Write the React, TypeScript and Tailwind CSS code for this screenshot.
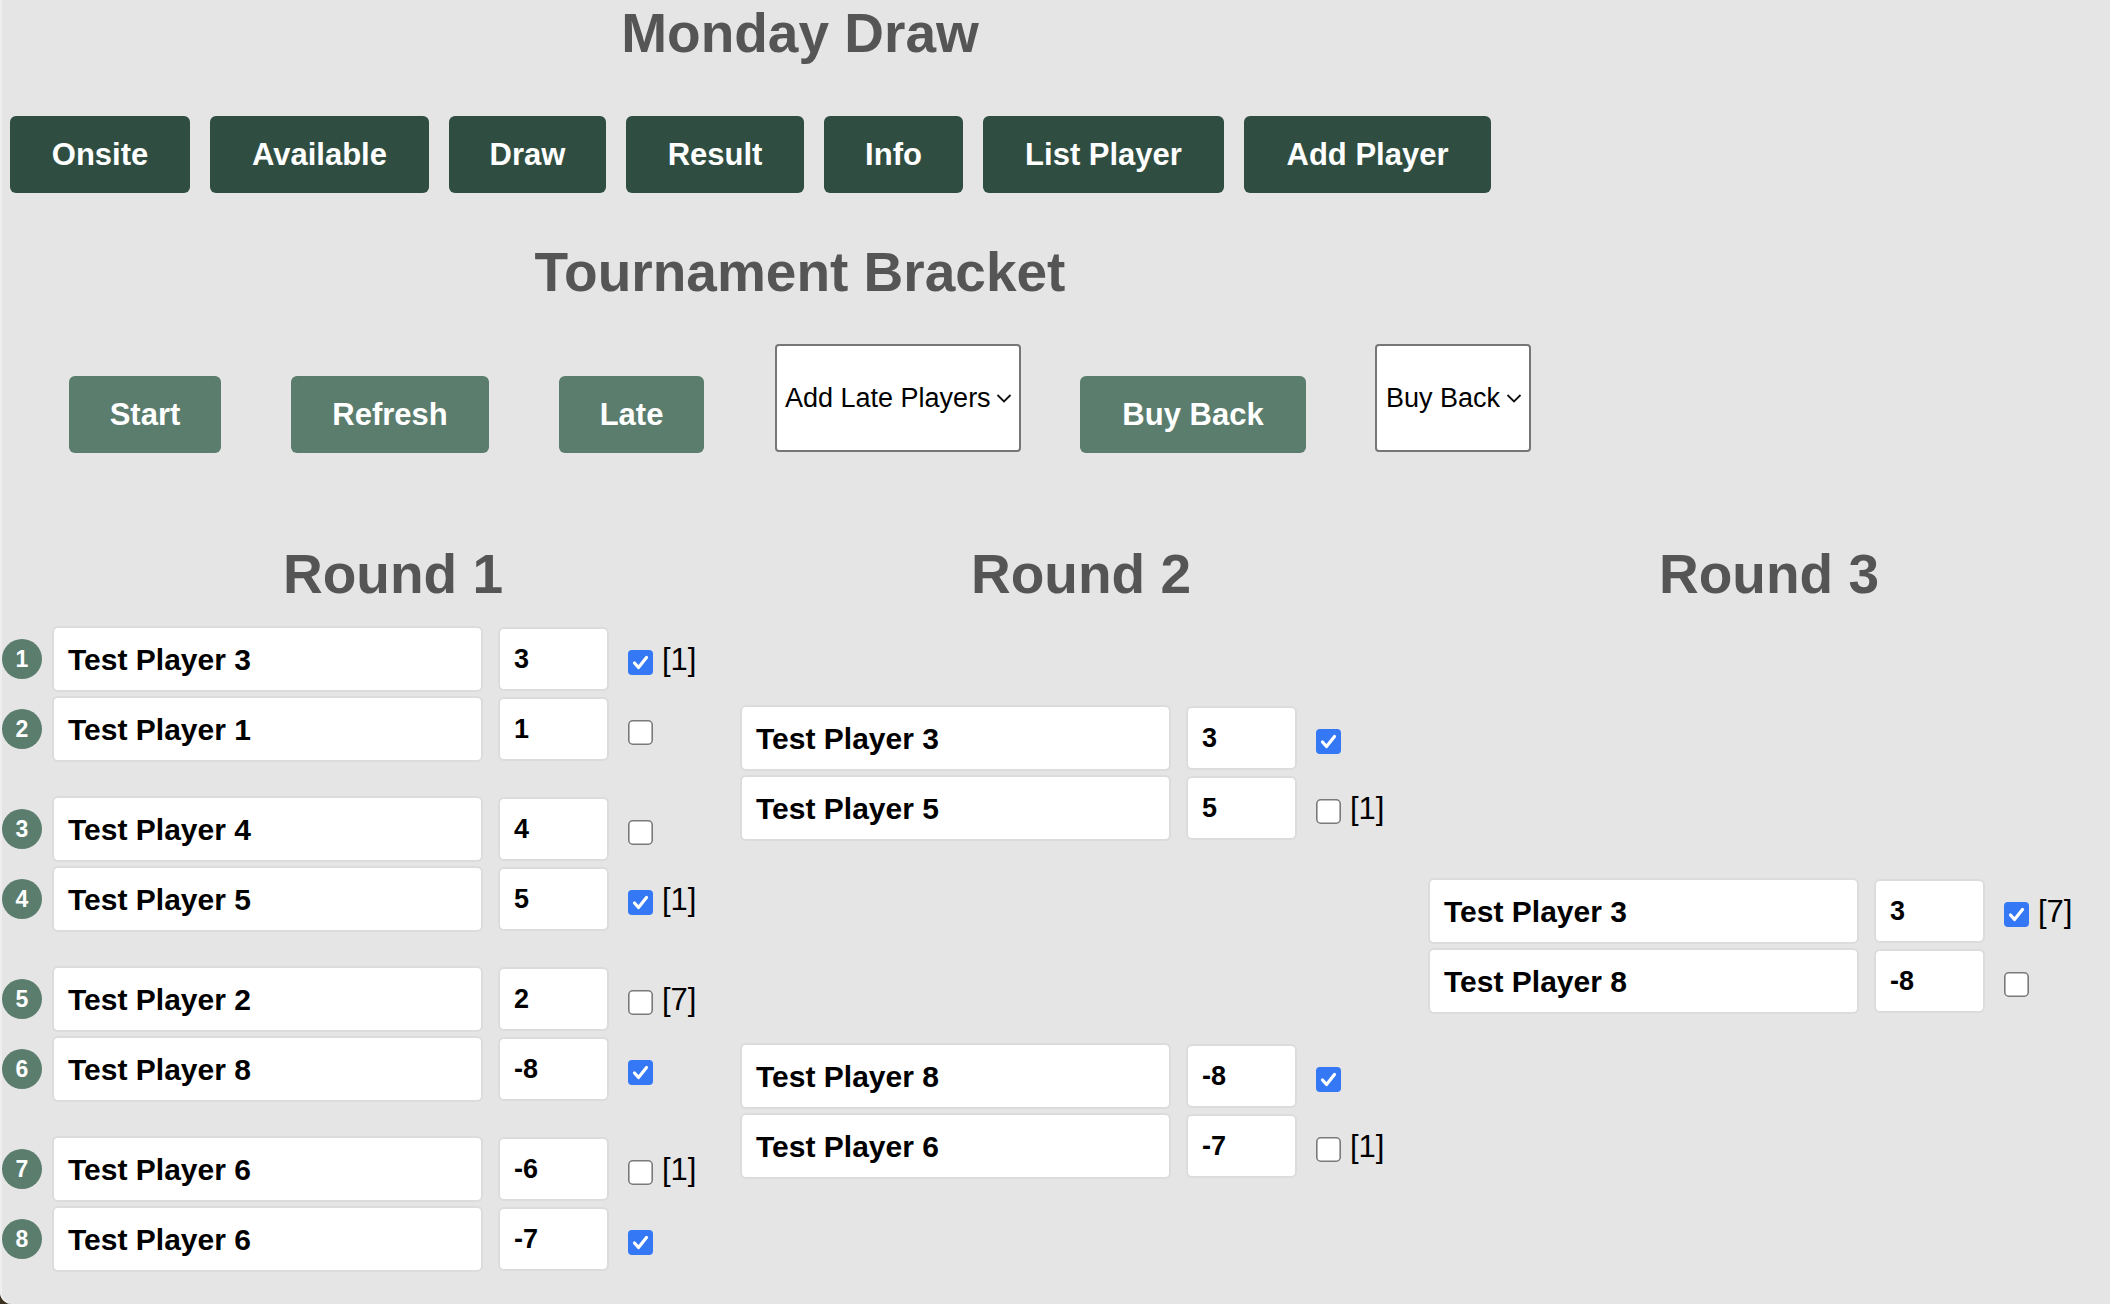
import React from "react";

type Entry = {
    name: string;
    score: string;
    checked: boolean;
    tag?: string;
};

const round1: Entry[][] = [
    [
        { name: "Test Player 3", score: "3", checked: true, tag: "[1]" },
        { name: "Test Player 1", score: "1", checked: false },
    ],
    [
        { name: "Test Player 4", score: "4", checked: false },
        { name: "Test Player 5", score: "5", checked: true, tag: "[1]" },
    ],
    [
        { name: "Test Player 2", score: "2", checked: false, tag: "[7]" },
        { name: "Test Player 8", score: "-8", checked: true },
    ],
    [
        { name: "Test Player 6", score: "-6", checked: false, tag: "[1]" },
        { name: "Test Player 6", score: "-7", checked: true },
    ],
];

const round2: Entry[][] = [
    [
        { name: "Test Player 3", score: "3", checked: true },
        { name: "Test Player 5", score: "5", checked: false, tag: "[1]" },
    ],
    [
        { name: "Test Player 8", score: "-8", checked: true },
        { name: "Test Player 6", score: "-7", checked: false, tag: "[1]" },
    ],
];

const round3: Entry[][] = [
    [
        { name: "Test Player 3", score: "3", checked: true, tag: "[7]" },
        { name: "Test Player 8", score: "-8", checked: false },
    ],
];

const navButtons = [
    { label: "Onsite", w: "w-[180px]" },
    { label: "Available", w: "w-[219px]" },
    { label: "Draw", w: "w-[157px]" },
    { label: "Result", w: "w-[178px]" },
    { label: "Info", w: "w-[139px]" },
    { label: "List Player", w: "w-[241px]" },
    { label: "Add Player", w: "w-[247px]" },
];

function Checkbox({ checked }: { checked: boolean }) {
    return (
        <svg width="25" height="25" viewBox="0 0 25 25" className="mt-[6px] shrink-0">
            {checked ? (
                <>
                    <rect x="0" y="0" width="25" height="25" rx="4" fill="#3478f6" />
                    <path d="M6.5 13 L10.5 17.5 L18.5 7.5" fill="none" stroke="#ffffff" strokeWidth="3.2" strokeLinecap="round" strokeLinejoin="round" />
                </>
            ) : (
                <rect x="0.8" y="0.8" width="23.4" height="23.4" rx="4" fill="#ffffff" stroke="#7a7a7a" strokeWidth="1.6" />
            )}
        </svg>
    );
}

function Chevron() {
    return (
        <svg width="16" height="10" viewBox="0 0 16 10" className="shrink-0">
            <path d="M1.5 2 L8 8.5 L14.5 2" fill="none" stroke="#111111" strokeWidth="1.8" />
        </svg>
    );
}

function PlayerRow({ entry, seed }: { entry: Entry; seed?: number }) {
    return (
        <div className="flex items-center h-[66px]">
            <div className="w-[52px] shrink-0">
                {seed !== undefined && (
                    <div className="ml-[2px] w-[40px] h-[40px] rounded-full bg-[#5b7d6e] flex items-center justify-center text-white font-bold text-[23px] leading-none">
                        {seed}
                    </div>
                )}
            </div>
            <div className="w-[431px] h-[66px] shrink-0 bg-white rounded-[6px] border-2 border-[#dcdcdc] flex items-center pl-[14px] text-[30px] font-bold text-black">
                {entry.name}
            </div>
            <div className="ml-[15px] w-[111px] h-[64px] shrink-0 bg-white rounded-[6px] border-2 border-[#dcdcdc] flex items-center pl-[14px] text-[27px] font-bold text-black">
                {entry.score}
            </div>
            <div className="ml-[19px] flex items-center">
                <Checkbox checked={entry.checked} />
                {entry.tag && (
                    <span className="ml-[9px] text-[31px] text-black leading-none">{entry.tag}</span>
                )}
            </div>
        </div>
    );
}

function RoundColumn({
    title,
    pairs,
    padTop,
    gap,
    seeded,
}: {
    title: string;
    pairs: Entry[][];
    padTop: string;
    gap: string;
    seeded?: boolean;
}) {
    return (
        <div className="w-[688px] shrink-0 flex flex-col">
            <h2 className="pl-[98px] text-center text-[55px] leading-[63px] font-bold text-[#555555]">
                {title}
            </h2>
            <div className={`mt-[20px] flex flex-col ${padTop} ${gap}`}>
                {pairs.map((pair, pi) => (
                    <div key={pi} className="flex flex-col gap-[4px]">
                        {pair.map((entry, ei) => (
                            <PlayerRow
                                key={ei}
                                entry={entry}
                                seed={seeded ? pi * 2 + ei + 1 : undefined}
                            />
                        ))}
                    </div>
                ))}
            </div>
        </div>
    );
}

export default function App() {
    return (
        <div className="min-h-[1304px] bg-[#3a3120] font-['Liberation_Sans',Arial,sans-serif]">
            <div className="min-h-[1304px] bg-[#e5e5e5] rounded-bl-[12px] shadow-[inset_2px_0_0_#eeeeee] overflow-hidden">
                <div className="w-[1600px]">
                    <h1 className="pt-[2px] text-center text-[55px] leading-[63px] font-bold text-[#555555]">
                        Monday Draw
                    </h1>

                    <div className="mt-[51px] pl-[10px] flex gap-[20px]">
                        {navButtons.map((b) => (
                            <button
                                key={b.label}
                                className={`${b.w} h-[77px] rounded-[6px] bg-[#2f4e41] text-white font-bold text-[31px] leading-none flex items-center justify-center`}
                            >
                                {b.label}
                            </button>
                        ))}
                    </div>

                    <h1 className="mt-[48px] text-center text-[55px] leading-[63px] font-bold text-[#555555]">
                        Tournament Bracket
                    </h1>
                </div>

                <div className="mt-[40px] flex items-start">
                    <button className="ml-[69px] mt-[32px] w-[152px] h-[77px] rounded-[6px] bg-[#5b7d6e] text-white font-bold text-[31px] leading-none flex items-center justify-center">
                        Start
                    </button>
                    <button className="ml-[70px] mt-[32px] w-[198px] h-[77px] rounded-[6px] bg-[#5b7d6e] text-white font-bold text-[31px] leading-none flex items-center justify-center">
                        Refresh
                    </button>
                    <button className="ml-[70px] mt-[32px] w-[145px] h-[77px] rounded-[6px] bg-[#5b7d6e] text-white font-bold text-[31px] leading-none flex items-center justify-center">
                        Late
                    </button>
                    <div className="ml-[71px] w-[246px] h-[108px] bg-white border-2 border-[#767676] rounded-[4px] flex items-center pl-[8px] pr-[7px] text-[27px] text-black">
                        <span className="flex-1 whitespace-nowrap">Add Late Players</span>
                        <Chevron />
                    </div>
                    <button className="ml-[59px] mt-[32px] w-[226px] h-[77px] rounded-[6px] bg-[#5b7d6e] text-white font-bold text-[31px] leading-none flex items-center justify-center">
                        Buy Back
                    </button>
                    <div className="ml-[69px] w-[156px] h-[108px] bg-white border-2 border-[#767676] rounded-[4px] flex items-center pl-[9px] pr-[7px] text-[27px] text-black">
                        <span className="flex-1 whitespace-nowrap">Buy Back</span>
                        <Chevron />
                    </div>
                </div>

                <div className="mt-[90px] flex">
                    <RoundColumn title="Round 1" pairs={round1} padTop="pt-0" gap="gap-[34px]" seeded />
                    <RoundColumn title="Round 2" pairs={round2} padTop="pt-[79px]" gap="gap-[202px]" />
                    <RoundColumn title="Round 3" pairs={round3} padTop="pt-[252px]" gap="gap-0" />
                </div>
            </div>
        </div>
    );
}
